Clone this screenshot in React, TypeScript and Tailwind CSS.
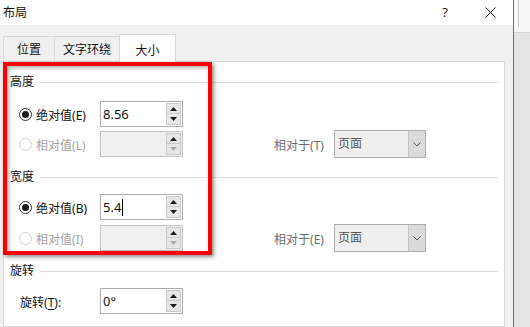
import React from 'react';

const font = "font-['Noto_Sans','Noto_Sans_CJK_SC',sans-serif]";

const Arrow: React.FC<{ up?: boolean; dim?: boolean }> = ({ up, dim }) => (
  <svg width="7" height="4" viewBox="0 0 7 4">
    <path d={up ? 'M0 4 L3.5 0 L7 4 Z' : 'M0 0 L3.5 4 L7 0 Z'} fill={dim ? '#a8a8a8' : '#1a1a1a'} />
  </svg>
);

const Spin: React.FC<{ disabled?: boolean }> = ({ disabled }) => (
  <div className="flex flex-col py-[1px] pr-[1px]">
    <div className="w-[15px] h-[11px] bg-[#e6e6e6] border border-[#c9c9c9] flex items-center justify-center">
      <Arrow up />
    </div>
    <div className="w-[15px] h-[11px] bg-[#e6e6e6] border border-[#c9c9c9] border-t-0 flex items-center justify-center">
      <Arrow dim={disabled} />
    </div>
  </div>
);

const NumberBox: React.FC<{ value?: string; disabled?: boolean; caret?: boolean }> = ({ value, disabled, caret }) => (
  <div
    className={`w-[83px] h-[26px] border flex items-stretch ${
      disabled ? 'bg-[#f0f0f0] border-[#c3c3c3]' : 'bg-white border-[#adadad]'
    }`}
  >
    <div className="flex-1 flex items-center pl-[2px] text-[13px] leading-none text-[#111]">
      {value}
      {caret && <span className="w-px h-[17px] bg-black ml-[1px]" />}
    </div>
    <Spin disabled={disabled} />
  </div>
);

const Radio: React.FC<{ checked?: boolean; disabled?: boolean }> = ({ checked, disabled }) => (
  <div
    className={`w-[13px] h-[13px] rounded-full border bg-white flex items-center justify-center ${
      disabled ? 'border-[#cfcfcf]' : 'border-[#333]'
    }`}
  >
    {checked && <div className="w-[7px] h-[7px] rounded-full bg-[#1a1a1a]" />}
  </div>
);

const Label: React.FC<{ text: string; keyChar: string; suffix?: string; underline?: boolean; className?: string }> = ({
  text,
  keyChar,
  suffix = '',
  underline,
  className = '',
}) => (
  <span className={`text-[12px] leading-none ${className}`}>
    {text}(<span className={underline ? 'underline underline-offset-2' : ''}>{keyChar}</span>){suffix}
  </span>
);

const Dropdown: React.FC = () => (
  <div className="w-[92px] h-[28px] border border-[#adadad] bg-[#efefef] flex items-stretch">
    <div className="flex-1 flex items-center pl-[3px] text-[12px] text-[#555]">页面</div>
    <div className="w-[17px] bg-[#dadada] border-l border-[#c4c4c4] flex items-center justify-center">
      <svg width="8" height="5" viewBox="0 0 8 5">
        <path d="M0.5 0.5 L4 4 L7.5 0.5" stroke="#555" strokeWidth="1" fill="none" />
      </svg>
    </div>
  </div>
);

const Section: React.FC<{ title: string; className?: string }> = ({ title, className = '' }) => (
  <div className={`flex items-center h-[16px] pl-[6px] pr-[5px] ${className}`}>
    <span className="text-[12px] leading-none text-[#111]">{title}</span>
    <div className="flex-1 h-px bg-[#dcdcdc] ml-[6px]" />
  </div>
);

const SizeRow: React.FC<{
  label: string;
  keyChar: string;
  checked?: boolean;
  disabled?: boolean;
  value?: string;
  caret?: boolean;
  relKey?: string;
  className?: string;
}> = ({ label, keyChar, checked, disabled, value, caret, relKey, className = '' }) => (
  <div className={`flex items-center h-[26px] pl-[15px] ${className}`}>
    <Radio checked={checked} disabled={disabled} />
    <div className="w-[64px] ml-[4px]">
      <Label text={label} keyChar={keyChar} className={disabled ? 'text-[#a3a3a3]' : 'text-[#111]'} />
    </div>
    <NumberBox value={value} disabled={disabled} caret={caret} />
    {relKey && (
      <>
        <div className="w-[60px] ml-[91px]">
          <Label text="相对于" keyChar={relKey} className="text-[#6b6b6b]" />
        </div>
        <Dropdown />
      </>
    )}
  </div>
);

const tabs = [
  { name: '位置', w: 'w-[51px]' },
  { name: '文字环绕', w: 'w-[65px]' },
];

export default function App() {
  return (
    <div className={`w-[530px] h-[327px] overflow-hidden flex bg-white ${font}`}>
      {/* dialog */}
      <div className="w-[514px] h-full flex flex-col border-r border-[#6e6e6e]">
        <div className="h-[25px] bg-white flex items-center pl-[3px] pr-[17px]">
          <span className="text-[12px] text-[#111] leading-none">布局</span>
          <span className="ml-auto text-[13px] text-[#222] leading-none">?</span>
          <svg className="ml-[37px]" width="11" height="11" viewBox="0 0 11 11">
            <path d="M0.5 0.5 L10.5 10.5 M10.5 0.5 L0.5 10.5" stroke="#111" strokeWidth="1" />
          </svg>
        </div>
        <div className="flex-1 bg-[#f0f0f0] pl-[3px] pr-[8px] flex flex-col">
          <div className="h-[36px] flex items-end">
            {tabs.map(t => (
              <div
                key={t.name}
                className={`${t.w} h-[25px] border border-b-0 border-r-0 border-[#d9d9d9] bg-[#f0f0f0] flex items-center justify-center pt-[2px] text-[12px] text-[#111]`}
              >
                {t.name}
              </div>
            ))}
            <div className="w-[57px] h-[28px] border border-b-0 border-[#d9d9d9] bg-white flex items-center justify-center pt-[4px] text-[12px] text-[#111] -mb-px relative z-10">
              大小
            </div>
          </div>
          <div className="flex-1 bg-white border border-[#d9d9d9] flex flex-col relative">
            <Section title="高度" className="mt-[12px]" />
            <SizeRow label="绝对值" keyChar="E" checked value="8.56" className="mt-[11px]" />
            <SizeRow label="相对值" keyChar="L" disabled relKey="T" className="mt-[4px]" />
            <Section title="宽度" className="mt-[12px]" />
            <SizeRow label="绝对值" keyChar="B" checked value="5.4" caret className="mt-[9px]" />
            <SizeRow label="相对值" keyChar="I" disabled relKey="E" className="mt-[5px]" />
            <Section title="旋转" className="mt-[12px]" />
            <div className="flex items-center h-[26px] pl-[16px] mt-[9px]">
              <div className="w-[80px]">
                <Label text="旋转" keyChar="T" suffix=":" underline className="text-[#111]" />
              </div>
              <NumberBox value="0°" />
            </div>
          </div>
        </div>
        {/* red annotation box */}
        <div className="absolute left-[3px] top-[62px] w-[209px] h-[193px] border-4 border-[#ff0000] shadow-[2px_2px_4px_rgba(0,0,0,0.45),inset_2px_2px_4px_rgba(0,0,0,0.3)] pointer-events-none z-20" />
      </div>
      {/* window behind */}
      <div className="flex-1 flex flex-col">
        <div className="h-[32px] bg-[#f7f7f7] pl-[4px]">
          <div className="w-px h-[27px] bg-[#c8c8c8]" />
        </div>
        <div className="flex-1 bg-[#e4e4e4] border-t border-[#d4d4d4]" />
      </div>
    </div>
  );
}
